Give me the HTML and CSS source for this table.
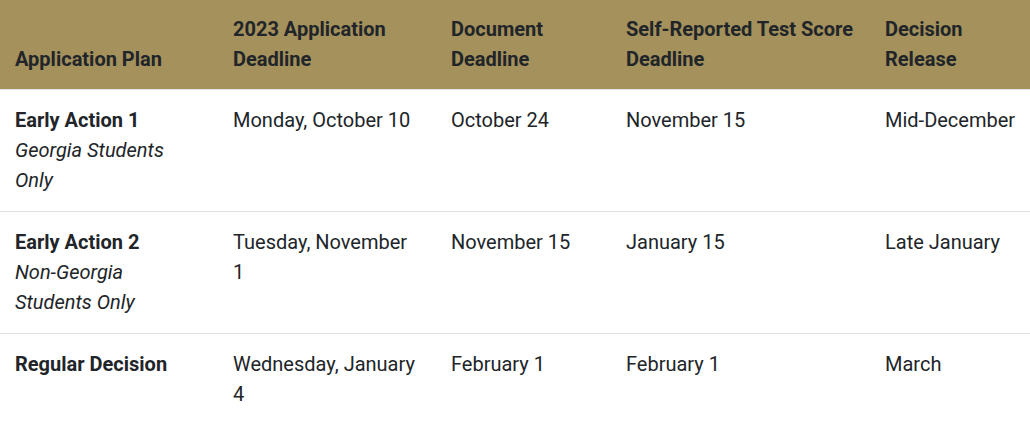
FILE: index.html
```html
<!DOCTYPE html>
<html lang="en">
<head>
<meta charset="utf-8">
<title>Application Deadlines</title>
<link rel="stylesheet" href="styles.css">
</head>
<body>
<div class="wrap">
<table class="deadlines">
  <colgroup>
    <col class="c1"><col class="c2"><col class="c3"><col class="c4"><col class="c5">
  </colgroup>
  <thead>
    <tr>
      <th>Application Plan</th>
      <th>2023 Application Deadline</th>
      <th>Document Deadline</th>
      <th class="wide">Self-Reported Test Score Deadline</th>
      <th class="last">Decision Release</th>
    </tr>
  </thead>
  <tbody>
    <tr>
      <td><strong>Early Action 1</strong><br><em>Georgia Students Only</em></td>
      <td>Monday, October 10</td>
      <td>October 24</td>
      <td class="wide">November 15</td>
      <td class="last">Mid-December</td>
    </tr>
    <tr>
      <td><strong>Early Action 2</strong><br><em>Non-Georgia Students Only</em></td>
      <td>Tuesday, November 1</td>
      <td>November 15</td>
      <td class="wide">January 15</td>
      <td class="last">Late January</td>
    </tr>
    <tr>
      <td><strong>Regular Decision</strong></td>
      <td>Wednesday, January 4</td>
      <td>February 1</td>
      <td class="wide">February 1</td>
      <td class="last">March</td>
    </tr>
  </tbody>
</table>
</div>
</body>
</html>
```

FILE: styles.css
```css
html, body {
  margin: 0;
  padding: 0;
  background: #ffffff;
}
body {
  font-family: Roboto, "Liberation Sans", Arial, sans-serif;
  font-size: 20px;
  line-height: 30px;
  color: #212529;
}
.wrap {
  width: 1030px;
  overflow: hidden;
}
.deadlines {
  width: 1030px;
  border-collapse: collapse;
  table-layout: fixed;
}
.c1 { width: 218px; }
.c2 { width: 218px; }
.c3 { width: 175px; }
.c4 { width: 259px; }
.c5 { width: 160px; }
.deadlines th {
  background: #a4915b;
  color: #212529;
  font-weight: 700;
  text-align: left;
  vertical-align: bottom;
  padding: 14px 19px 15px 15px;
  border-bottom: 1px solid #dee2e6;
}
.deadlines td {
  text-align: left;
  vertical-align: top;
  padding: 15px 19px 16px 15px;
  border-top: 1px solid #dee2e6;
}
.deadlines tbody tr:first-child td {
  border-top: 0;
}
.deadlines .wide {
  padding-right: 10px;
}
.deadlines .last {
  padding-right: 0;
}
.deadlines strong {
  font-weight: 700;
}
.deadlines em {
  font-style: italic;
}
```
